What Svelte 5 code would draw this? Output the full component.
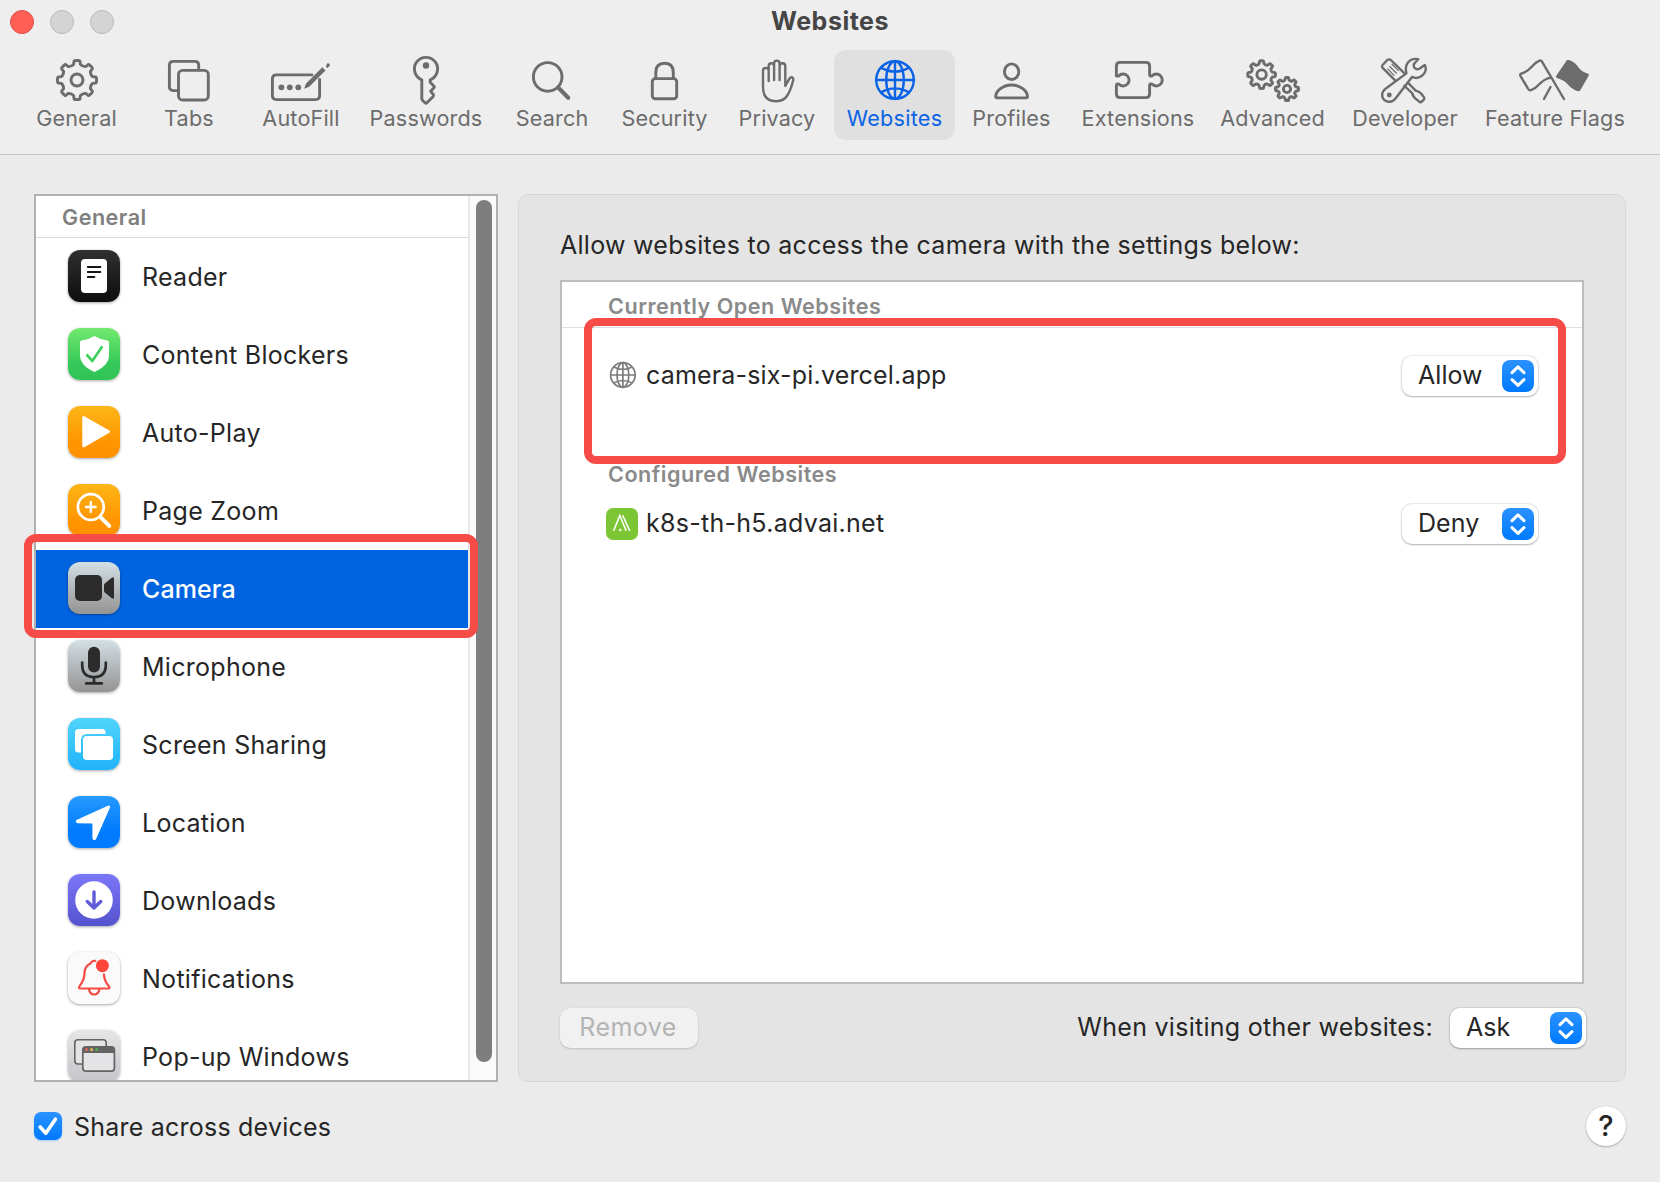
<script>
  // Outline of a cog wheel with rounded valleys between its teeth.
  function gear(cx, cy, outer, inner, teeth = 8) {
    const step = (Math.PI * 2) / teeth;
    const at = (r, a) =>
      `${(cx + r * Math.sin(a)).toFixed(2)} ${(cy - r * Math.cos(a)).toFixed(2)}`;
    let d = '';
    for (let i = 0; i < teeth; i++) {
      const a = i * step;
      d += `${i ? 'L' : 'M'}${at(outer - 0.6, a - step * 0.2)}`;
      d += `Q${at(outer + 0.1, a - step * 0.17)} ${at(outer, a - step * 0.1)}`;
      d += `L${at(outer, a + step * 0.1)}`;
      d += `Q${at(outer + 0.1, a + step * 0.17)} ${at(outer - 0.6, a + step * 0.2)}`;
      d += `L${at(inner + 0.8, a + step * 0.27)}`;
      d += `Q${at(inner - 0.9, a + step * 0.5)} ${at(inner + 0.8, a + step * 0.73)}`;
    }
    return d + 'Z';
  }

  const tabs = [
    { id: 'general', label: 'General', width: 113 },
    { id: 'tabs', label: 'Tabs', width: 112 },
    { id: 'autofill', label: 'AutoFill', width: 112 },
    { id: 'passwords', label: 'Passwords', width: 138 },
    { id: 'search', label: 'Search', width: 114 },
    { id: 'security', label: 'Security', width: 111 },
    { id: 'privacy', label: 'Privacy', width: 114 },
    { id: 'websites', label: 'Websites', width: 121 },
    { id: 'profiles', label: 'Profiles', width: 113 },
    { id: 'extensions', label: 'Extensions', width: 140 },
    { id: 'advanced', label: 'Advanced', width: 129 },
    { id: 'developer', label: 'Developer', width: 136 },
    { id: 'flags', label: 'Feature Flags', width: 164 }
  ];

  const settings = [
    { id: 'reader', label: 'Reader' },
    { id: 'blockers', label: 'Content Blockers' },
    { id: 'autoplay', label: 'Auto-Play' },
    { id: 'zoom', label: 'Page Zoom' },
    { id: 'camera', label: 'Camera' },
    { id: 'microphone', label: 'Microphone' },
    { id: 'sharing', label: 'Screen Sharing' },
    { id: 'location', label: 'Location' },
    { id: 'downloads', label: 'Downloads' },
    { id: 'notifications', label: 'Notifications' },
    { id: 'popups', label: 'Pop-up Windows' }
  ];

  let activeTab = $state('websites');
  let activeSetting = $state('camera');
  let shared = $state(true);
</script>

{#snippet popup(value)}
  <button class="popup">
    <span>{value}</span>
    <svg class="stepper" viewBox="0 0 32 32">
      <path d="M10 12.6 16 6.8 22 12.6M10 19.6 16 25.4 22 19.6" />
    </svg>
  </button>
{/snippet}

<div class="window">
  <header>
    <div class="titlebar">
      <div class="lights"><i class="close"></i><i></i><i></i></div>
      <h1>Websites</h1>
    </div>
    <nav>
      {#each tabs as tab (tab.id)}
        <button
          class="tab"
          class:active={activeTab === tab.id}
          style:width="{tab.width}px"
          onclick={() => (activeTab = tab.id)}
        >
          <svg class="glyph" viewBox="0 0 72 56">
            {#if tab.id === 'general'}
              <path d={gear(36, 28, 19.6, 15.2)} />
              <circle cx="36" cy="28" r="6" />
            {:else if tab.id === 'tabs'}
              <rect x="25.5" y="18.4" width="29.8" height="29.6" rx="4" />
              <path d="M45.7 17.5V13.4Q45.7 9.4 41.7 9.4H20.4Q16.4 9.4 16.4 13.4V34.6Q16.4 38.6 20.4 38.6H25" />
            {:else if tab.id === 'autofill'}
              <path d="M47 22.9H11.4Q7.4 22.9 7.4 26.9V43.6Q7.4 47.6 11.4 47.6H50.6Q54.6 47.6 54.6 43.6V27.5" />
              <circle class="solid" cx="16.4" cy="35.3" r="2.9" />
              <circle class="solid" cx="24.8" cy="35.3" r="2.9" />
              <circle class="solid" cx="33.3" cy="35.3" r="2.9" />
              <path class="solid" d="M39.1 36.8 41.1 31.4 57.3 15.3 60.5 18.5 44.2 34.7Z" />
              <path class="solid" d="M60.9 14.8 62 11.6Q63.2 10.6 64.4 11.8T64.4 14.2L62.2 16Z" />
            {:else if tab.id === 'passwords'}
              <path d="M31.8 27.8A11.6 11.6 0 1 1 40.2 27.8V30.3L44 34.2Q44.6 35 44 35.8L40.6 39.2 43.3 42.6Q43.9 43.6 43.2 44.4L36.9 50.8Q36 51.5 35.1 50.8L32.5 48.4Q31.8 47.6 31.8 46.6Z" />
              <circle class="solid" cx="36" cy="13.5" r="3.2" />
            {:else if tab.id === 'search'}
              <circle cx="31.7" cy="24.9" r="14.3" />
              <path class="thick" d="M42.3 35.6 52.2 45.7" />
            {:else if tab.id === 'security'}
              <rect x="23.3" y="26.6" width="24.4" height="20.2" rx="3" />
              <path d="M26.8 26V20.4Q26.8 11.2 35.5 11.2 44.3 11.2 44.3 20.4V26" />
            {:else if tab.id === 'privacy'}
              <path
                class="fine"
                d="M27.7 29V18.5Q27.7 16 24.9 16 22 16 22 18.5V35Q22 49.2 35.5 49.2 42.7 49.2 46.3 43.5 49.7 38 52 29 52.9 26.2 51.2 25.4 49.2 24.8 47.8 27.6L44.3 34V14Q44.3 11.2 41.4 11.2 38.6 11.2 38.6 14V28M38.6 14V11.5Q38.6 8.6 35.8 8.6 33.1 8.6 33.1 11.5V28M33.1 14Q33.1 11.2 30.4 11.2 27.7 11.2 27.7 14V20"
              />
            {:else if tab.id === 'websites'}
              <g class="fine">
                <circle cx="36" cy="28" r="18.8" />
                <path d="M36 9V47M17 28H55M22 15.6Q36 23.6 50 15.6M22 40.4Q36 32.4 50 40.4" />
                <ellipse cx="36" cy="28" rx="8.8" ry="18.8" />
              </g>
            {:else if tab.id === 'profiles'}
              <ellipse cx="35.6" cy="19.7" rx="7.2" ry="7.8" />
              <path d="M19.8 45.3C19.2 39.5 26.5 33 35.6 33S52 39.5 51.4 45.3Q51.3 45.9 50.5 45.9H20.7Q19.9 45.9 19.8 45.3Z" />
            {:else if tab.id === 'extensions'}
              <path d="M14.4 24V14Q14.4 10.4 18 10.4H44Q47.6 10.4 47.6 14V22.4Q47.7 24.8 49.9 23.9A6 6 0 1 1 49.9 32.1Q47.7 31.2 47.6 33.6V42Q47.6 45.6 44 45.6H18Q14.4 45.6 14.4 42V33.6Q14.5 31.2 16.7 32.1A6 6 0 1 0 16.7 23.9Q14.5 24.8 14.4 22.4" />
            {:else if tab.id === 'advanced'}
              <path d={gear(24.6, 22.6, 13.9, 10.5)} />
              <circle cx="24.6" cy="22.6" r="4.7" />
              <path d={gear(50, 37, 11.6, 8.7)} />
              <circle cx="50" cy="37" r="3.6" />
            {:else if tab.id === 'developer'}
              <g class="fine">
                <path d="M26.6 28.8 13.4 15.6Q12.4 14.4 13.4 13.2L18.3 8Q20 6.8 21.8 8L35 20.8" />
                <path class="hair" d="M18.7 16.9 25 23.3M20.7 14.5 27.5 21.2M23 12.3 29.5 18.6" />
                <path d="M35.4 33.8 43 41Q44.5 45.5 47 47L50.6 49.9Q51.8 50.7 52.7 49.7L55 47.3Q55.8 46.3 55 45.3L52.3 41.7Q50 39.5 46.7 38.7L38.8 30.7" />
                <path d="M49.3 7.2 45.3 11.5Q44 13.5 45.5 15.8 47.8 18 50.3 16.7L55.8 12.9C59.5 20.5 51 28.5 43 24.9L26.5 46.6C22 52.5 12.5 49.5 13.2 41.8Q13.7 38.6 16.5 36.7L37.4 21.4C35 12.5 40.5 5.5 49.3 7.2Z" />
                <circle class="solid" cx="20.3" cy="43" r="2.4" />
              </g>
            {:else}
              <path class="fine" d="M45 47 23 9.6Q22 8 20.5 8.7C11.5 12.5 14 18 2.2 21.7Q.8 22.3 1.4 23.8L9.3 37.2Q10.3 38.7 12 38.2C22 34.5 19 28.6 31.5 25.6M31.5 35 25 47" />
              <path class="solid" d="M47.8 8.2Q49 7.3 50.6 8.2C61 12.3 57.5 18 69.2 21.8Q70.3 22.5 69.7 23.8L61.3 38.3Q60.2 39.7 58.3 39C47.7 35 50.5 29.6 37.8 26Q36.4 25 37.2 23.8Z" />
            {/if}
          </svg>
          <span>{tab.label}</span>
        </button>
      {/each}
    </nav>
  </header>

  <main>
    <aside>
      <div class="list">
        <h2>General</h2>
        {#each settings as item (item.id)}
          <button
            class="setting"
            class:selected={activeSetting === item.id}
            onclick={() => (activeSetting = item.id)}
          >
            <svg class="tile {item.id}" viewBox="0 0 52 52">
              {#if item.id === 'reader'}
                <rect x="13" y="9" width="26" height="34" rx="4" fill="#fff" />
                <path d="M19.8 17H32.4M19.8 22H32.4M19.8 27H26.4" stroke="#151515" stroke-width="1.9" />
              {:else if item.id === 'blockers'}
                <path d="M26.4 8Q33 12 39.5 12.6 41 13 41 14.5V27Q41 37.5 26.4 44 12 37.5 12 27V14.5Q12 13 13.5 12.6 20 12 26.4 8Z" fill="#fff" />
                <path d="M19.3 27.3 24.3 33 33.7 19.2" stroke="#3fcf5c" stroke-width="2.7" />
              {:else if item.id === 'autoplay'}
                <path d="M15.6 11.4 40.7 25.7 15.6 40Z" fill="#fff" stroke="#fff" stroke-width="2.6" />
              {:else if item.id === 'zoom'}
                <g stroke="#fff">
                  <circle cx="22.8" cy="23" r="12.9" stroke-width="2.7" />
                  <path d="M33.2 33.8 41.3 41.8" stroke-width="4" />
                  <path d="M17.8 23H27.8M22.8 18V28" stroke-width="2.3" />
                </g>
              {:else if item.id === 'camera'}
                <rect x="7" y="13" width="27" height="26" rx="5" fill="#2c2c2c" />
                <path d="M36 23.3Q36 22.3 36.8 21.5L43.7 15.7Q46 14.4 46 16.6V35.4Q46 37.6 43.7 36.3L36.8 30.5Q36 29.7 36 28.7Z" fill="#2c2c2c" />
              {:else if item.id === 'microphone'}
                <rect x="20" y="6.8" width="12" height="25.6" rx="6" fill="#2c2c2c" />
                <path d="M14.2 22.5V25Q14.2 37 26 37T37.8 25V22.5M26 37V43.4M18.2 43.4H33.8" stroke="#2c2c2c" stroke-width="2.7" />
              {:else if item.id === 'sharing'}
                <path d="M37.6 16H19Q13 16 13 22V34.6H10.5Q7 34.6 7 31.1V14.5Q7 11 10.5 11H34Q37.6 11 37.6 14.5Z" fill="#fff" />
                <rect x="15" y="18" width="30" height="24" rx="3.8" fill="#fff" />
              {:else if item.id === 'location'}
                <path d="M41 10.7 27 42.6Q26 43.4 25.6 42.2V27.2Q25.6 26.4 24.8 26.4L9.6 26Q8.6 25.6 9.4 24.8Z" fill="#fff" stroke="#fff" stroke-width="2.4" />
              {:else if item.id === 'downloads'}
                <circle cx="26" cy="26" r="18.8" fill="#fff" />
                <path d="M26 18V33.6M19.3 27.5 26 34 32.7 27.5" stroke="#5f5bdb" stroke-width="3.4" />
              {:else if item.id === 'notifications'}
                <path d="M27.3 8.8C24 8.5 23.3 9.7 22.4 11.6 17.5 13.8 16.6 17.3 16.4 21.5 16.3 27 15.5 29 12.4 32.8 10.4 35.5 10.6 36.5 12.5 36.5H40C42 36.5 42 35.5 40 33 37 29.5 36.3 27.5 35.9 22.3" stroke="#f44b45" stroke-width="2.2" />
                <path d="M21 37Q21.8 42.5 26.2 42.5T31.4 37" stroke="#f44b45" stroke-width="2.2" />
                <circle cx="34.4" cy="13.7" r="6.5" fill="#ff443b" />
              {:else}
                <rect x="6.8" y="9.8" width="31.4" height="24.2" rx="3.2" fill="#e4e4e6" stroke="#636363" stroke-width="1.6" />
                <rect x="14.8" y="16.8" width="31.6" height="24.4" rx="3.2" fill="#e4e4e6" stroke="#636363" stroke-width="1.7" />
                <path d="M14.8 23V20Q14.8 16.8 18 16.8H43.2Q46.4 16.8 46.4 20V23Z" fill="#636363" />
                <circle cx="18.6" cy="19.6" r="1.5" fill="#e0615a" />
                <circle cx="23.6" cy="19.6" r="1.5" fill="#e9b54a" />
                <circle cx="28.6" cy="19.6" r="1.5" fill="#45b04f" />
              {/if}
            </svg>
            <span>{item.label}</span>
          </button>
        {/each}
      </div>
      <div class="track"><div class="thumb"></div></div>
    </aside>

    <section class="panel">
      <p class="intro">Allow websites to access the camera with the settings below:</p>
      <div class="table">
        <h3 class="first">Currently Open Websites</h3>
        <div class="site open">
          <svg class="favicon globe" viewBox="0 0 32 32">
            <g>
              <circle cx="16.9" cy="15" r="12.3" />
              <path d="M16.9 2.7V27.3M4.6 15H29.2M7.8 7Q16.9 12 26 7M7.8 23Q16.9 18 26 23" />
              <ellipse cx="16.9" cy="15" rx="5.9" ry="12.3" />
            </g>
          </svg>
          <span class="host">camera-six-pi.vercel.app</span>
          {@render popup('Allow')}
        </div>
        <h3>Configured Websites</h3>
        <div class="site">
          <svg class="favicon" viewBox="0 0 32 32">
            <rect width="32" height="32" rx="7" fill="#7cc636" />
            <path d="M7.6 22.9 13.8 7.4 20.2 22.9M16.6 7.2 23.8 22.9" fill="none" stroke="#fff" stroke-width="1.5" />
            <path d="M12.8 23 14.3 20 15.8 23Z" fill="#fff" />
          </svg>
          <span class="host">k8s-th-h5.advai.net</span>
          {@render popup('Deny')}
        </div>
      </div>
      <div class="actions">
        <button class="remove" disabled>Remove</button>
        <span class="fallback">When visiting other websites:</span>
        {@render popup('Ask')}
      </div>
    </section>
  </main>

  <footer>
    <button class="check" aria-pressed={shared} onclick={() => (shared = !shared)}>
      <svg viewBox="0 0 28 28">
        {#if shared}<path d="M6.2 15 11.8 21.2 21.4 7.2" />{/if}
      </svg>
      <span>Share across devices</span>
    </button>
    <button class="help">?</button>
  </footer>

  <div class="marker marker-setting"></div>
  <div class="marker marker-site"></div>
</div>

<style>
  :global(body) {
    margin: 0;
    background: #ebebeb;
  }
  .window {
    position: relative;
    box-sizing: border-box;
    width: 1660px;
    height: 1182px;
    overflow: hidden;
    display: flex;
    flex-direction: column;
    background: #ebebeb;
    color: #262626;
    font: 25px/30px Inter, 'Liberation Sans', sans-serif;
    letter-spacing: 0.28px;
    white-space: nowrap;
  }
  button {
    margin: 0;
    padding: 0;
    border: 0;
    background: none;
    color: inherit;
    font: inherit;
    letter-spacing: inherit;
    text-align: left;
  }
  h1, h2, h3, p { margin: 0; }
  svg { display: block; flex: none; }

  header {
    box-sizing: border-box;
    height: 155px;
    background: #eee;
    border-bottom: 1px solid #c3c3c3;
  }
  .titlebar {
    display: grid;
    grid-template-columns: 1fr auto 1fr;
    align-items: center;
    height: 44px;
    margin-bottom: 6px;
    padding: 0 10px;
  }
  .lights { display: flex; gap: 16px; }
  .lights i {
    box-sizing: border-box;
    width: 24px;
    height: 24px;
    border: 1px solid #b9b9b9;
    border-radius: 50%;
    background: #d4d4d4;
  }
  .lights .close { background: #ff5f57; border-color: #e24b43; }
  h1 {
    padding-bottom: 2px;
    color: #454545;
    font-size: 25px;
    font-weight: 700;
    letter-spacing: 0.5px;
  }
  nav { display: flex; padding-left: 20px; }
  .tab {
    box-sizing: border-box;
    height: 90px;
    padding-top: 2px;
    display: flex;
    flex-direction: column;
    align-items: center;
    border-radius: 12px;
    color: #6c6c6c;
    font-size: 21.6px;
    letter-spacing: 0.17px;
    line-height: 20px;
  }
  .tab.active { background: #e0e0e0; color: #0a63e6; letter-spacing: 0.27px; }
  .glyph {
    width: 72px;
    height: 56px;
    fill: none;
    stroke: currentColor;
    stroke-width: 2.9;
    stroke-linejoin: round;
    stroke-linecap: round;
  }
  .glyph .fine { stroke-width: 2.4; }
  .glyph .hair { stroke-width: 1.2; }
  .glyph .thick { stroke-width: 4.2; }
  .glyph .solid { fill: currentColor; stroke: none; }

  main {
    display: flex;
    gap: 20px;
    height: 888px;
    padding: 39px 34px 0;
  }
  aside {
    box-sizing: border-box;
    width: 464px;
    display: flex;
    border: 2px solid #b0b0b0;
    background: #fff;
    overflow: hidden;
  }
  .list { flex: 1; height: 884px; overflow: hidden; }
  h2 {
    box-sizing: border-box;
    height: 42px;
    padding: 6px 0 0 26px;
    border-bottom: 1px solid #d9d9d9;
    color: #808080;
    font-size: 21.6px;
    font-weight: 600;
    letter-spacing: 0.48px;
    line-height: 30px;
  }
  .setting {
    box-sizing: border-box;
    width: 100%;
    height: 78px;
    padding-left: 32px;
    display: flex;
    align-items: center;
    gap: 22px;
  }
  .setting.selected {
    background: #0064e1;
    color: #fff;
    font-weight: 500;
    letter-spacing: 0.1px;
  }
  .tile {
    width: 52px;
    height: 52px;
    margin-bottom: 2px;
    border-radius: 12px;
    box-shadow: 0 1px 3px rgb(0 0 0 / 35%);
    fill: none;
    stroke-linecap: round;
    stroke-linejoin: round;
  }
  .reader { background: linear-gradient(#303030, #0d0d0d); }
  .blockers { background: linear-gradient(#72e96e, #34c759 70%, #31c455); }
  .autoplay, .zoom { background: linear-gradient(#fdb518, #ff9500 70%, #ff8f00); }
  .camera, .microphone { background: linear-gradient(#d3dfe5, #949393); }
  .sharing { background: linear-gradient(#50d5fb, #20b2fb); }
  .location { background: linear-gradient(#259aff, #007aff 70%); }
  .downloads { background: linear-gradient(#7b77f9, #5552cf); }
  .notifications { background: #fafafa; }
  .popups { background: linear-gradient(#e6e6e6, #c4c4ca); }
  .track {
    box-sizing: border-box;
    width: 28px;
    padding: 4px 0 18px 6px;
    border-left: 2px solid #e8e8e8;
    background: #fafafa;
  }
  .thumb { width: 16px; height: 862px; border-radius: 8px; background: #7d7d7d; }

  .panel {
    box-sizing: border-box;
    width: 1108px;
    padding: 35px 39px 0 41px;
    border: 1px solid #d7d7d7;
    border-radius: 10px;
    background: #e4e4e4;
  }
  .intro { padding-bottom: 20px; }
  .table {
    box-sizing: border-box;
    width: 1024px;
    height: 704px;
    border: 2px solid #bdbdbd;
    background: #fff;
  }
  h3 {
    height: 44px;
    margin-top: 28px;
    padding-left: 46px;
    color: #8a8a8a;
    font-size: 21.6px;
    font-weight: 600;
    letter-spacing: 0.5px;
    line-height: 44px;
  }
  h3.first {
    height: 43px;
    margin: 0;
    padding-top: 2px;
    border-bottom: 1px solid #dedede;
  }
  .site {
    height: 56px;
    padding: 0 44px;
    display: flex;
    align-items: center;
  }
  .site.open { height: 96px; }
  .favicon { width: 32px; height: 32px; margin-right: 8px; }
  .globe g { fill: none; stroke: #7c7c7c; stroke-width: 1.7; }
  .host { flex: 1; padding-bottom: 2px; }
  .open .host { letter-spacing: 0.18px; }
  .popup {
    box-sizing: border-box;
    width: 136px;
    height: 40px;
    padding: 0 4px 0 16px;
    display: flex;
    align-items: center;
    justify-content: space-between;
    border-radius: 10px;
    background: #fff;
    box-shadow: 0 0 1px 1px rgb(0 0 0 / 8%), 0 1px 2px rgb(0 0 0 / 25%);
    letter-spacing: 0.05px;
  }
  .popup span { padding-bottom: 2px; }
  .stepper {
    width: 32px;
    height: 32px;
    border-radius: 8px;
    background: linear-gradient(#2b92ff, #007aff);
    fill: none;
    stroke: #fff;
    stroke-width: 3;
    stroke-linecap: round;
    stroke-linejoin: round;
  }
  .actions {
    display: flex;
    align-items: center;
    width: 1026px;
    margin-top: 24px;
  }
  .remove {
    box-sizing: border-box;
    width: 138px;
    height: 40px;
    padding: 0 2px 2px 0;
    border-radius: 10px;
    background: #f1f1f1;
    box-shadow: 0 0 1px rgb(0 0 0 / 15%), 0 1px 2px rgb(0 0 0 / 15%);
    color: #b4b4b4;
    letter-spacing: 0.45px;
    text-align: center;
  }
  .fallback { margin: 0 17px 2px auto; }

  footer {
    display: flex;
    justify-content: space-between;
    align-items: center;
    height: 40px;
    margin-top: 24px;
    padding: 0 34px;
  }
  .check { display: flex; align-items: center; gap: 12px; }
  .check span { padding-top: 1px; letter-spacing: 0.22px; }
  .check svg {
    width: 28px;
    height: 28px;
    border-radius: 7px;
    background: linear-gradient(#2b92ff, #007aff);
    box-shadow: 0 1px 2px rgb(0 122 255 / 30%);
    fill: none;
    stroke: #fff;
    stroke-width: 3.6;
    stroke-linecap: round;
    stroke-linejoin: round;
  }
  .help {
    width: 40px;
    height: 40px;
    border-radius: 50%;
    background: #fff;
    box-shadow: 0 0 1px rgb(0 0 0 / 20%), 0 1px 2px rgb(0 0 0 / 25%);
    font-size: 29px;
    font-weight: 500;
    line-height: 40px;
    text-align: center;
  }

  .marker {
    position: absolute;
    box-sizing: border-box;
    border: 8px solid #f64b46;
    border-radius: 12px;
    pointer-events: none;
  }
  .marker-setting { left: 24px; top: 534px; width: 454px; height: 104px; }
  .marker-site { left: 584px; top: 318px; width: 982px; height: 146px; }
</style>
